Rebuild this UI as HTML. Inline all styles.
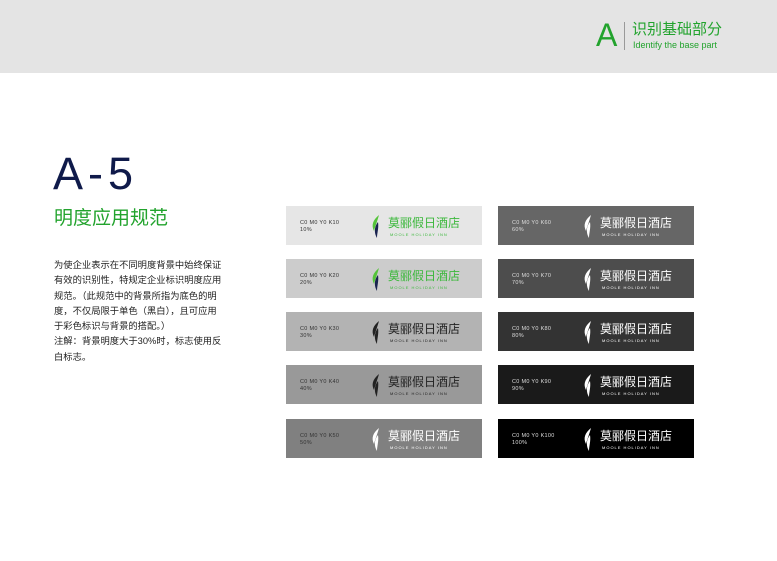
<!DOCTYPE html>
<html><head><meta charset="utf-8"><style>
*{margin:0;padding:0;box-sizing:border-box}
body{width:777px;height:561px;background:#fff;position:relative;overflow:hidden;font-family:"Liberation Sans","Noto Sans CJK SC",sans-serif}
.hdr{position:absolute;left:0;top:0;width:777px;height:73px;background:#e4e4e4}
.box{position:absolute;width:196px;height:39px}
.lab{position:absolute;left:14px;top:14px;font-size:5.5px;line-height:7px;letter-spacing:.3px}
.logo{position:absolute;left:84px;top:7px;width:100px;height:28px}
.logo svg{position:absolute;left:0;top:2px}
.cn{position:absolute;left:18px;top:3px;font-size:12px;line-height:14px;white-space:nowrap}
.en{position:absolute;left:20px;top:19px;font-size:4px;letter-spacing:1px;white-space:nowrap}
</style></head><body>
<div class="hdr"></div>
<div style="position:absolute;left:596px;top:17px;font-size:32px;color:#22a32d;line-height:36px">A</div>
<div style="position:absolute;left:624px;top:22px;width:1px;height:28px;background:#999"></div>
<div style="position:absolute;left:632px;top:21px;font-size:15px;color:#22a32d;line-height:17px">识别基础部分</div>
<div style="position:absolute;left:633px;top:40px;font-size:9px;color:#22a32d">Identify the base part</div>

<div style="position:absolute;left:53px;top:149px;font-size:45px;color:#0f1a4a;line-height:50px;letter-spacing:5px">A-5</div>
<div style="position:absolute;left:54px;top:207px;font-size:19px;color:#22a32d;line-height:24px">明度应用规范</div>
<div style="position:absolute;left:54px;top:258px;font-size:9.3px;line-height:15.3px;color:#222;white-space:nowrap">为使企业表示在不同明度背景中始终保证<br>有效的识别性，特规定企业标识明度应用<br>规范。（此规范中的背景所指为底色的明<br>度，不仅局限于单色（黑白），且可应用<br>于彩色标识与背景的搭配。）<br>注解：背景明度大于30%时，标志使用反<br>白标志。</div>

<div id="c"></div>
<script>
const rows=[206,259,312,365,419];
const L=["#e6e6e6","#cccccc","#b3b3b3","#999999","#808080"];
const R=["#666666","#4d4d4d","#333333","#1a1a1a","#000000"];
let h="";
function box(x,y,bg,k,mode){
 const lc=(k>=60)?"#ddd":"#333";
 let tc,c1,c2;
 if(mode=="g"){tc="#3cb83c";c1="#55c43a";c2="#1a2350";}
 else if(mode=="b"){tc="#222";c1="#222";c2="#222";}
 else{tc="#fff";c1="#fff";c2="#fff";}
 h+=`<div class="box" style="left:${x}px;top:${y}px;background:${bg}"><div class="lab" style="color:${lc}">C0 M0 Y0 K${k}<br>${k}%</div><div class="logo"><svg width="14" height="24" viewBox="0 0 14 24"><path d="M9 0C3 5 1 10 4 16C5 12 7 7 9 0Z" fill="${c1}"/><path d="M8 7C4 12 4 18 7 23C7 18 9 13 8 7Z" fill="${c2}"/></svg><div class="cn" style="color:${tc}">莫郦假日酒店</div><div class="en" style="color:${tc}">MOOLE HOLIDAY INN</div></div></div>`;
}
rows.forEach((y,i)=>{box(286,y,L[i],(i+1)*10,i<2?"g":(i<4?"b":"w"));box(498,y,R[i],(i+6)*10,"w");});
document.getElementById("c").innerHTML=h;
</script>
</body></html>
